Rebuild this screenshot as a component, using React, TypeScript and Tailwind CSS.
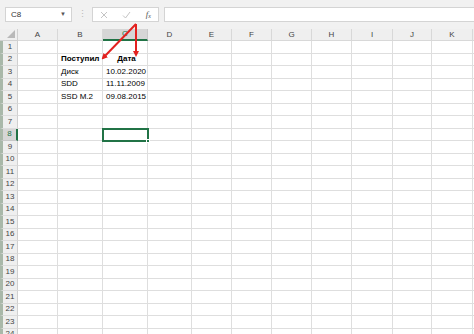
import React from 'react';

const cols = [
  { name: 'A', w: 'w-[40px]' },
  { name: 'B', w: 'w-[45px]' },
  { name: 'C', w: 'w-[45px]' },
  { name: 'D', w: 'w-[44px]' },
  { name: 'E', w: 'w-[40px]' },
  { name: 'F', w: 'w-[40px]' },
  { name: 'G', w: 'w-[40px]' },
  { name: 'H', w: 'w-[40px]' },
  { name: 'I', w: 'w-[41px]' },
  { name: 'J', w: 'w-[39px]' },
  { name: 'K', w: 'w-[41px]' },
];

const data: Record<string, { text: string; bold?: boolean; center?: boolean }> = {
  'B2': { text: 'Поступил', bold: true },
  'C2': { text: 'Дата', bold: true, center: true },
  'B3': { text: 'Диск' },
  'C3': { text: '10.02.2020' },
  'B4': { text: 'SDD' },
  'C4': { text: '11.11.2009' },
  'B5': { text: 'SSD M.2' },
  'C5': { text: '09.08.2015' },
};

const rows = Array.from({ length: 24 }, (_, i) => i + 1);

function FormulaBar() {
  return (
    <div className="flex h-[29px] items-start gap-[4px] bg-[#f1f1f1] pt-[7px] pl-[5px]">
      <div className="flex h-[15px] w-[67px] items-center justify-between border border-[#d4d4d4] bg-white pl-[5px] pr-[5px] text-[8px] text-[#333]">
        <span>C8</span>
        <span className="text-[6px] text-[#555]">▼</span>
      </div>
      <div className="flex h-[15px] w-[12px] items-center justify-center text-[9px] text-[#b8b8b8]">⋮</div>
      <div className="flex h-[15px] w-[67px] items-center justify-between border border-[#d4d4d4] bg-white px-[7px] text-[#c4c4c4]">
        <svg width="8" height="8" viewBox="0 0 8 8"><path d="M1 1 L7 7 M7 1 L1 7" stroke="#c4c4c4" strokeWidth="1" /></svg>
        <svg width="9" height="8" viewBox="0 0 9 8"><path d="M1 4.5 L3.5 7 L8 1" stroke="#c4c4c4" strokeWidth="1" fill="none" /></svg>
        <span className="font-['Liberation_Serif',serif] text-[9px] italic text-[#555]">f<sub className="text-[6px]">x</sub></span>
      </div>
      <div className="ml-[1px] h-[15px] flex-1 border border-r-0 border-[#d4d4d4] bg-white" />
    </div>
  );
}

function HeaderRow() {
  return (
    <div className="flex h-[12px] bg-[#efefef] text-[8px] text-[#444]">
      <div className="relative w-[18px] shrink-0 border-r border-b border-[#d0d0d0]">
        <svg className="absolute right-[2px] bottom-[2px]" width="8" height="8" viewBox="0 0 8 8"><path d="M8 0 L8 8 L0 8 Z" fill="#b9b9b9" /></svg>
      </div>
      {cols.map((c) =>
        c.name === 'C' ? (
          <div key={c.name} className={`${c.w} shrink-0 flex items-center justify-center border-r border-[#c8c8c8] border-b-2 border-b-[#217346] bg-[#d6d6d6] text-[#217346]`}>
            {c.name}
          </div>
        ) : (
          <div key={c.name} className={`${c.w} shrink-0 flex items-center justify-center border-r border-b border-[#d8d8d8]`}>
            {c.name}
          </div>
        )
      )}
      <div className="flex-1 border-b border-[#d8d8d8]" />
    </div>
  );
}

function Row({ n }: { n: number }) {
  const sel = n === 8;
  return (
    <div className="flex h-[12.5px] text-[8px]">
      <div className={`flex w-[18px] shrink-0 items-center justify-center border-b border-l-[3px] border-l-[#a9b8a9] ${sel ? 'border-r-2 border-r-[#217346] border-b-[#c8c8c8] bg-[#d6d6d6] text-[#217346]' : 'border-r border-r-[#d0d0d0] border-b-[#dcdcdc] bg-[#efefef] text-[#444]'}`}>
        {n}
      </div>
      {cols.map((c) => {
        const cell = data[c.name + n];
        return (
          <div
            key={c.name}
            className={`${c.w} shrink-0 flex items-center overflow-visible whitespace-nowrap border-r border-b border-[#dedede] bg-white pl-[3px] text-black ${cell?.center ? 'justify-center pl-0' : ''} ${cell?.bold ? 'font-bold' : ''}`}
          >
            {cell?.text}
          </div>
        );
      })}
      <div className="flex-1 border-b border-[#dedede] bg-white" />
    </div>
  );
}

export default function App() {
  return (
    <div className="relative h-[334px] w-[474px] overflow-hidden bg-white font-['Liberation_Sans',Arial,sans-serif]">
      <FormulaBar />
      <HeaderRow />
      {rows.map((n) => (
        <Row key={n} n={n} />
      ))}

      {/* selected cell C8 */}
      <div className="absolute left-[102px] top-[128px] h-[14px] w-[47px] border-2 border-[#217346]">
        <div className="absolute -right-[3px] -bottom-[3px] h-[4px] w-[4px] border border-white bg-[#217346]" />
      </div>

      {/* red arrows */}
      <svg className="pointer-events-none absolute left-0 top-0" width="474" height="334">
        <defs>
          <marker id="ah" markerWidth="6" markerHeight="6" refX="4" refY="3" orient="auto" markerUnits="userSpaceOnUse">
            <path d="M0 0 L6 3 L0 6 Z" fill="#e3211f" />
          </marker>
        </defs>
        <line x1="136" y1="24" x2="103" y2="58" stroke="#e3211f" strokeWidth="2" markerEnd="url(#ah)" />
        <line x1="136" y1="24" x2="136" y2="55" stroke="#e3211f" strokeWidth="2" markerEnd="url(#ah)" />
      </svg>
    </div>
  );
}
